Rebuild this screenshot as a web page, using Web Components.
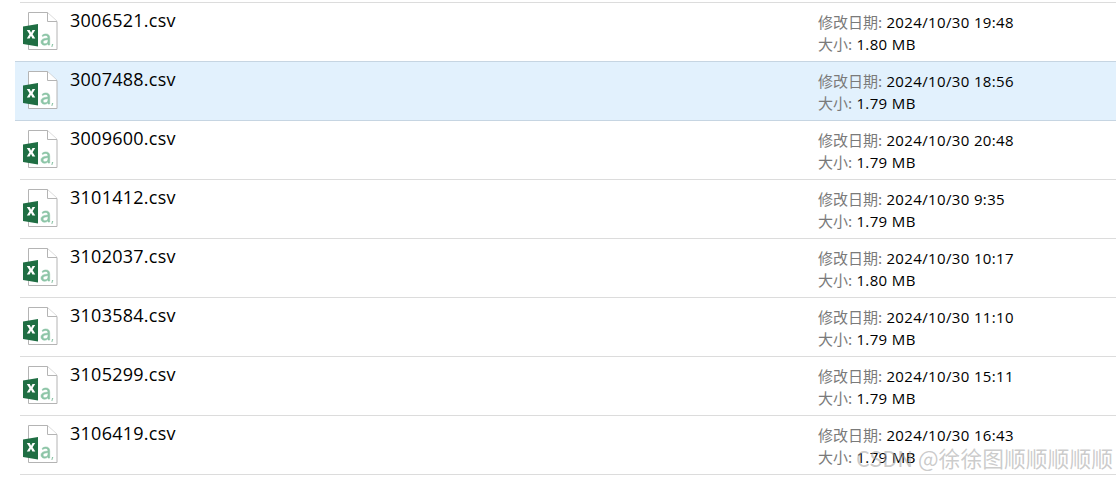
<!DOCTYPE html>
<html lang="zh"><head><meta charset="utf-8"><title>Files</title>
<style>html,body{margin:0;padding:0;background:#fff;overflow:hidden}body{width:1116px;height:479px;position:relative}</style>
</head><body>
<file-list>
<file-row name="3006521.csv" date="2024/10/30 19:48" size="1.80 MB"></file-row>
<file-row selected name="3007488.csv" date="2024/10/30 18:56" size="1.79 MB"></file-row>
<file-row name="3009600.csv" date="2024/10/30 20:48" size="1.79 MB"></file-row>
<file-row name="3101412.csv" date="2024/10/30 9:35" size="1.79 MB"></file-row>
<file-row name="3102037.csv" date="2024/10/30 10:17" size="1.80 MB"></file-row>
<file-row name="3103584.csv" date="2024/10/30 11:10" size="1.79 MB"></file-row>
<file-row name="3105299.csv" date="2024/10/30 15:11" size="1.79 MB"></file-row>
<file-row name="3106419.csv" date="2024/10/30 16:43" size="1.79 MB"></file-row>
</file-list>
<water-mark>CSDN @徐徐图顺顺顺顺顺</water-mark>
<script>
class FileList extends HTMLElement{constructor(){super();this.attachShadow({mode:'open'}).innerHTML=`<style>:host{display:block;padding-top:2px}.top{height:1px;margin-left:20px;background:#dcdcdc}</style><div class="top"></div><slot></slot>`}}
customElements.define('file-list',FileList);
class ExcelIcon extends HTMLElement{constructor(){super();this.attachShadow({mode:'open'}).innerHTML=`<style>:host{display:block;width:36px;height:40px}svg{display:block}</style>
<svg width="36" height="40" viewBox="0 0 36 40"><path d="M5.500 .5H24.500L34 9.500V37.500H5.500Z" fill="#fff" stroke="#b4b4b4"/><path d="M24.500 .5V9.500H34" fill="#fff" stroke="#b4b4b4"/>
<path d="M0 14.500 L15 12 V34.500 L0 32Z" fill="#1f6e43"/><path d="M3.800 18h2.900l1.400 2.700 1.400-2.700h2.700l-2.600 4.200 2.700 4.300h-2.900l-1.400-2.700-1.400 2.700H3.800l2.700-4.300z" fill="#fff"/>
<path d="M19.200 23.300c1-.8 2.200-1.300 3.600-1.300 2.600 0 3.900 1.400 3.900 4V33h-1.700v-1.500c-.8 1.100-2 1.700-3.400 1.700-2.200 0-3.600-1.300-3.600-3.200 0-2.100 1.500-3.300 4.300-3.600l2.700-.3c0-1.900-.8-2.700-2.400-2.700-1.100 0-2.100.4-3 1.100zM25 27.600l-2.200.3c-1.900.2-2.700.8-2.700 2.100 0 1.100.8 1.800 2 1.800 1.700 0 2.900-1.200 2.900-3z" fill="#8cc4a6" stroke="#8cc4a6" stroke-width=".6"/><path d="M29 32h1.300l-1 3h-.9z" fill="#8cc4a6"/></svg>`}}
customElements.define('excel-icon',ExcelIcon);
class FileRow extends HTMLElement{constructor(){super();const a=n=>this.getAttribute(n);this.attachShadow({mode:'open'}).innerHTML=`<style>
:host{display:flex;height:58px;margin-left:20px;border-bottom:1px solid #dcdcdc;font-family:"Open Sans","Noto Sans CJK SC",sans-serif;color:#000}
:host([selected]){margin-left:15px;padding-left:5px;background:#e2f1fd;border-bottom-color:#c6d5e2;box-shadow:0 -1px 0 #c6d5e2}
excel-icon{margin:9px 0 0 3px}
.name{margin-left:11px;font-size:18px;line-height:24px;padding-top:5px;flex:1;letter-spacing:.26px}
.meta{width:298px;font-size:15px;padding-top:8px;letter-spacing:.36px}
.meta div{height:22px;line-height:22px;white-space:nowrap}
.l{color:#7a7a7a;font-family:"Noto Sans CJK SC",sans-serif;letter-spacing:0;line-height:1}
</style><excel-icon></excel-icon><div class="name">${a('name')}</div><div class="meta"><div><span class="l">修改日期:</span> ${a('date')}</div><div><span class="l">大小:</span> ${a('size')}</div></div>`}}
customElements.define('file-row',FileRow);
class WaterMark extends HTMLElement{constructor(){super();this.attachShadow({mode:'open'}).innerHTML=`<style>:host{position:absolute;right:3px;top:444px;font-family:"Noto Sans CJK SC",sans-serif;font-size:21.800px;line-height:28px;color:rgba(160,160,160,.55);white-space:nowrap}</style><slot></slot>`}}
customElements.define('water-mark',WaterMark);
</script>
</body></html>
